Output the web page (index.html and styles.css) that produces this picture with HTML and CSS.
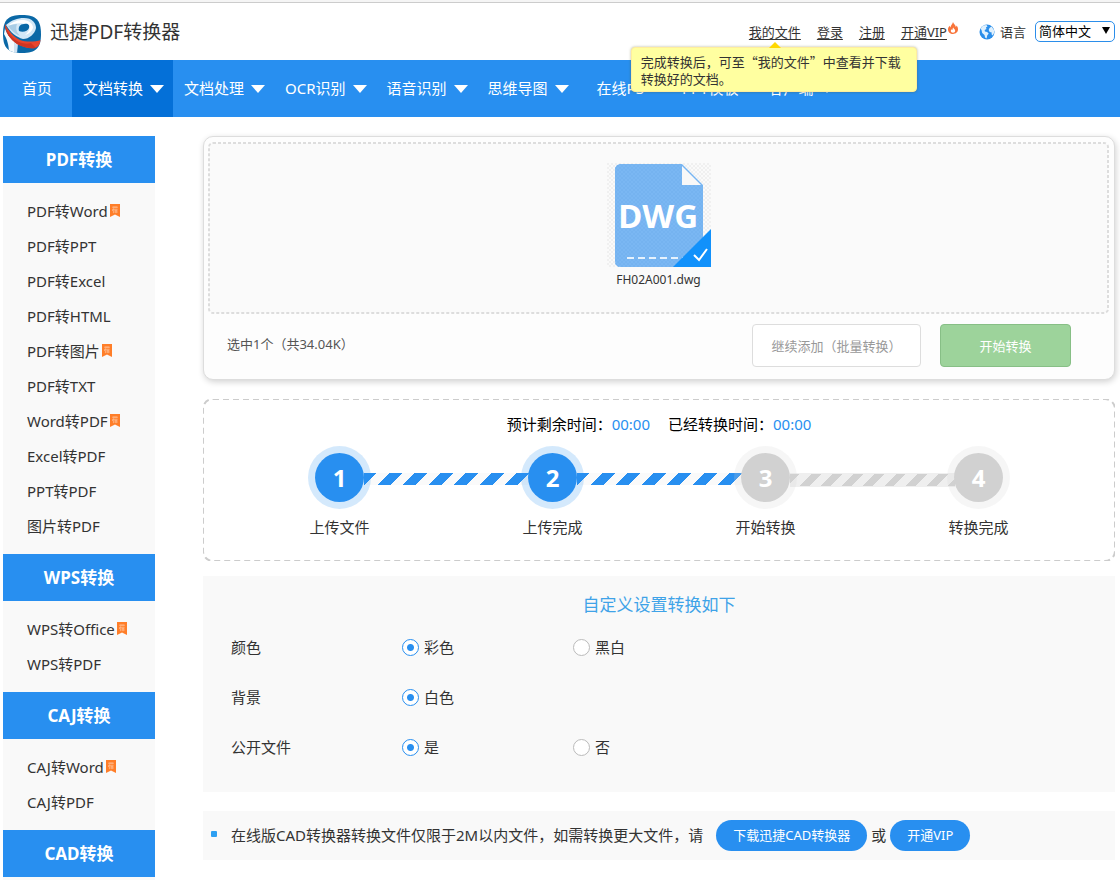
FILE: index.html
```html
<!DOCTYPE html>
<html lang="zh-CN">
<head>
<meta charset="utf-8">
<title>迅捷PDF转换器</title>
<link rel="stylesheet" href="styles.css">
</head>
<body>
<svg class="defs" width="0" height="0" aria-hidden="true">
  <symbol id="flag" viewBox="0 0 10 13">
    <path d="M0 0h10v13l-5-2.400L0 13z" fill="#ff7e29"/>
    <path d="M2 3.200h6M4 2.200v2M6 2.200v2M2.400 5.300h5.200M3.500 4.500L2.400 7M3.400 6.200v3M4.400 6.600h3M6 6.600v2.600M4.200 8h3.600" stroke="#ffd2b3" stroke-width=".6" fill="none"/>
  </symbol>
</svg>

<header class="header">
  <a class="brand" href="#">
    <svg class="brand-logo" viewBox="0 0 38 38" aria-hidden="true">
      <defs><clipPath id="tile"><path d="M19 0C33 0 38 5 38 19S33 38 19 38 0 33 0 19 5 0 19 0z"/></clipPath></defs>
      <g clip-path="url(#tile)">
        <path d="M0 0h38v38H0z" fill="#0a68a6"/>
        <path d="M2 13c1 5 5 10 10 14 1 4 1 8 1 11H6C6 30 4 24 1 19z" fill="#f6fafd"/>
        <path d="M11 26l4 3-1 9h-3z" fill="#cfe2f1"/>
        <path d="M3 10C9 5 14 3 21 3c8 0 12 5 12 10-1 6-7 11-13 11-7-2-12-6-17-14z" fill="#d3e8f7"/>
        <path d="M5 11c5-5 10-6 16-6 6 1 9 4 9 8-1 3-4 6-8 7 4-3 6-7 3-9-5-4-13-3-20 0z" fill="#fff"/>
        <path d="M5 11c3-1 6-2 9-2-1 2-1 5 0 8l3 4C12 19 8 15 5 11z" fill="#a9cde6"/>
        <path d="M16 16c-1-4 1-7 5-7 4-1 6 1 5 4-1 3-6 5-10 3z" fill="#0a68a6"/>
        <path d="M2 9c3 7 9 13 15 16 6 2 14 2 21 0-1 5-3 7-6 8-6 1-12-1-18-4C7 24 2 17 2 9z" fill="#e8452c"/>
        <path d="M2 9c2 9 8 15 14 18 5 2 9 2 12 1l5 5c-7 1-13-1-19-4C7 24 2 17 2 9z" fill="#cf3523"/>
      </g>
    </svg>
    <span class="brand-name">迅捷PDF转换器</span>
  </a>
  <div class="account">
    <span class="files">
      <a href="#">我的文件</a>
      <span class="tip" role="tooltip">完成转换后，可至“我的文件”中查看并下载转换好的文档。</span>
    </span>
    <a href="#">登录</a>
    <a href="#">注册</a>
    <span class="vip"><a href="#">开通VIP</a><svg class="flame" viewBox="0 0 10 12" aria-hidden="true"><path d="M5 0c.3 2 3 3 2.800 5 .6-.3.8-.8.8-1.400C9.600 4.800 10 6 10 7.300 10 10 7.800 12 5 12S0 10 0 7.400C0 5.800.8 4.700 1.800 3.800c0 .8.2 1.300.7 1.600C2.500 3.300 4.600 2.400 5 0z" fill="#f8743a"/><path d="M5.200 5.500c.2 1.200 2 1.700 2 3.300 0 1.200-1 2-2.200 2s-2.200-.8-2.200-2c0-.8.4-1.200.8-1.600.2.500.5.7.8.7.3-.7.2-1.600.8-2.400z" fill="#fff"/></svg></span>
    <div class="lang">
      <svg class="globe" viewBox="0 0 16 16" aria-hidden="true"><circle cx="8" cy="8" r="7.500" fill="#2a8eea"/><path d="M1.500 4.500L4 1.600 7.500 1l1 1.600-1.600 1 .6 1.300-1.800 1 .2 1.500 2.200.6 1.600 1.600-1.500 2-.6 2.800-1.500-.8-.6-2.600-2.300-2L2.500 6zM10.500 4l2-1.500L15 6v3l-1.200 2.600-1.300-1.300.2-1.800-2-.6-1-1.900z" fill="#dff0fd"/></svg>
      <label for="language">语言</label>
      <span class="select"><select id="language"><option>简体中文</option></select></span>
    </div>
  </div>
</header>

<nav class="nav">
  <a class="plain home" href="#">首页</a>
  <a class="drop active" href="#">文档转换</a>
  <a class="drop" href="#">文档处理</a>
  <a class="drop" href="#">OCR识别</a>
  <a class="drop" href="#">语音识别</a>
  <a class="drop" href="#">思维导图</a>
  <a class="plain" href="#">在线PS</a>
  <a class="plain" href="#">PPT模板</a>
  <a class="drop" href="#">客户端</a>
</nav>

<div class="page">
  <aside class="side">
    <h2>PDF转换</h2>
    <ul>
      <li><a href="#">PDF转Word</a><svg class="flag"><use href="#flag"/></svg></li>
      <li><a href="#">PDF转PPT</a></li>
      <li><a href="#">PDF转Excel</a></li>
      <li><a href="#">PDF转HTML</a></li>
      <li><a href="#">PDF转图片</a><svg class="flag"><use href="#flag"/></svg></li>
      <li><a href="#">PDF转TXT</a></li>
      <li><a href="#">Word转PDF</a><svg class="flag"><use href="#flag"/></svg></li>
      <li><a href="#">Excel转PDF</a></li>
      <li><a href="#">PPT转PDF</a></li>
      <li><a href="#">图片转PDF</a></li>
    </ul>
    <h2>WPS转换</h2>
    <ul>
      <li><a href="#">WPS转Office</a><svg class="flag"><use href="#flag"/></svg></li>
      <li><a href="#">WPS转PDF</a></li>
    </ul>
    <h2>CAJ转换</h2>
    <ul>
      <li><a href="#">CAJ转Word</a><svg class="flag"><use href="#flag"/></svg></li>
      <li><a href="#">CAJ转PDF</a></li>
    </ul>
    <h2>CAD转换</h2>
  </aside>

  <main class="main">
    <section class="upload">
      <div class="dropzone">
        <svg class="outline" aria-hidden="true"><rect width="100%" height="100%" rx="4"/></svg>
        <figure class="file">
          <svg class="file-icon" viewBox="0 0 104 104" role="img" aria-label="DWG">
            <defs>
              <pattern id="check" width="4" height="4" patternUnits="userSpaceOnUse"><path d="M0 0h2v2H0zM2 2h2v2H2z" fill="#f0f0f0"/></pattern>
              <pattern id="weave" width="4" height="4" patternUnits="userSpaceOnUse"><path d="M0 0h2v2H0zM2 2h2v2H2z" fill="#75b3f0"/></pattern>
            </defs>
            <path d="M0 0h104v104H0z" fill="url(#check)"/>
            <path d="M14 1h61l21 21v82H14q-6 0-6-6V7q0-6 6-6z" fill="#7ab7f3"/>
            <path d="M14 1h61l21 21v82H14q-6 0-6-6V7q0-6 6-6z" fill="url(#weave)"/>
            <path d="M75 3v19h19z" fill="#f8f8f8"/>
            <text class="file-type" x="51" y="65" text-anchor="middle">DWG</text>
            <path d="M20 95h60" stroke="#e6f2fd" stroke-width="2" stroke-dasharray="7 4"/>
            <path d="M104 66v38H66z" fill="#1191fb"/>
            <path d="M87 92l5 5 8-11" fill="none" stroke="#fff" stroke-width="2"/>
          </svg>
          <figcaption>FH02A001.dwg</figcaption>
        </figure>
      </div>
      <div class="actions">
        <p>选中1个（共34.04K）</p>
        <button class="more" type="button">继续添加（批量转换）</button>
        <button class="start" type="button">开始转换</button>
      </div>
    </section>

    <section class="progress">
      <svg class="outline" aria-hidden="true"><rect width="100%" height="100%" rx="10"/></svg>
      <p class="times"><span>预计剩余时间：<b>00:00</b></span><span>已经转换时间：<b>00:00</b></span></p>
      <ol class="steps">
        <li class="done"><span class="dot">1</span>上传文件</li>
        <li class="done"><span class="dot">2</span>上传完成</li>
        <li><span class="dot">3</span>开始转换</li>
        <li><span class="dot">4</span>转换完成</li>
      </ol>
    </section>

    <form class="options">
      <h3>自定义设置转换如下</h3>
      <div class="option" role="radiogroup" aria-labelledby="o-color">
        <span id="o-color">颜色</span>
        <label><input type="radio" name="color" checked>彩色</label>
        <label><input type="radio" name="color">黑白</label>
      </div>
      <div class="option" role="radiogroup" aria-labelledby="o-bg">
        <span id="o-bg">背景</span>
        <label><input type="radio" name="bg" checked>白色</label>
      </div>
      <div class="option" role="radiogroup" aria-labelledby="o-public">
        <span id="o-public">公开文件</span>
        <label><input type="radio" name="public" checked>是</label>
        <label><input type="radio" name="public">否</label>
      </div>
    </form>

    <div class="note">
      <span class="note-text">在线版CAD转换器转换文件仅限于2M以内文件，如需转换更大文件，请</span>
      <a href="#">下载迅捷CAD转换器</a>
      <span>或</span>
      <a href="#">开通VIP</a>
    </div>
  </main>
</div>
</body>
</html>
```
FILE: styles.css
```css
* { box-sizing: border-box; }

body, h2, h3, p, ul, ol, figure { margin: 0; padding: 0; }

body {
  font: 15px/20px "Noto Sans", "Noto Sans CJK SC", sans-serif;
  color: #333;
  background: #fff;
  border-top: 2px solid #f5f5f5;
}

a { color: inherit; text-decoration: none; }
ul, ol { list-style: none; }
button, select { font: inherit; }
.defs { position: absolute; }

/* Header */
.header {
  display: flex;
  justify-content: space-between;
  height: 58px;
  padding: 0 5px 0 3px;
  border-top: 1px solid #ccc;
}

.brand { display: flex; align-items: center; gap: 9px; padding-top: 5px; }
.brand-logo { width: 38px; height: 38px; }
.brand-name { font-size: 19px; line-height: 28px; padding-bottom: 4px; }

.account {
  display: flex;
  align-items: center;
  align-self: flex-start;
  gap: 16px;
  height: 57px;
  font-size: 13px;
}

.account a { text-decoration: underline; text-underline-offset: 2px; }
.files { position: relative; }
.vip { display: flex; }
.flame { width: 10px; height: 12px; margin: 0 5px 0 1px; }

.tip {
  position: absolute;
  z-index: 5;
  top: 25px;
  left: -118px;
  width: 286px;
  padding: 5px 9px 4px;
  font: 13px/17px "Noto Sans CJK SC", sans-serif;
  background: #ffffa0;
  border: 1px solid #ffee9c;
  border-radius: 4px;
  box-shadow: 0 0 3px rgba(80, 80, 0, .4);
}

.tip::before {
  content: "";
  position: absolute;
  top: -6px;
  left: 137px;
  border: solid transparent;
  border-width: 0 6px 6px;
  border-bottom-color: #ffd800;
}

.lang { display: flex; align-items: center; gap: 5px; }
.globe { width: 16px; height: 16px; }
.select { position: relative; margin-left: 4px; }

.select::after {
  content: "";
  position: absolute;
  top: 6px;
  right: 5px;
  border: solid transparent;
  border-width: 7px 4px 0;
  border-top-color: #000;
  pointer-events: none;
}

.select select {
  display: block;
  appearance: none;
  width: 80px;
  height: 21px;
  padding: 0 3px;
  font-size: 13px;
  line-height: 19px;
  color: #000;
  background: #fff;
  border: 1px solid #2b8eea;
  border-radius: 5px;
}

/* Navigation */
.nav { display: flex; height: 57px; line-height: 57px; color: #fff; background: #288ff0; }
.nav .plain { padding: 0 19px; }
.nav .home { padding: 0 20px 0 22px; }
.nav .drop { display: flex; align-items: center; gap: 7px; padding: 0 9px 0 11px; }
.nav .drop::after { content: ""; border: solid transparent; border-width: 8px 7px 0; border-top-color: #fff; }
.nav .active { background: #0470d8; }

/* Page body */
.page { display: flex; gap: 48px; padding: 19px 5px 0 3px; }

.side { flex: none; width: 152px; padding-bottom: 3px; background: #f9f9f9; }
.side h2 { font-size: 17px; line-height: 47px; color: #fff; text-align: center; background: #288ff0; }
.side ul { padding: 10px 0 11px 24px; }
.side li { display: flex; align-items: center; gap: 2px; height: 35px; }
.flag { width: 10px; height: 13px; }

.main { flex: 1; min-width: 0; }

/* Dashed outline that follows the box it sits in */
.outline { position: absolute; inset: 0; width: 100%; height: 100%; pointer-events: none; }
.outline rect { fill: none; stroke: #ccc; stroke-width: 2px; stroke-dasharray: 6 4; }

/* Upload panel */
.upload {
  padding: 6px 6px 12px 5px;
  background: #fdfdfd;
  border: 1px solid #ddd;
  border-radius: 10px;
  box-shadow: 1px 2px 6px rgba(0, 0, 0, .18);
}

.dropzone { position: relative; height: 170px; padding-top: 20px; background: #fafafa; border-radius: 4px; }
.dropzone .outline { overflow: visible; }
.dropzone .outline rect { stroke: #ddd; stroke-dasharray: 3 2; }
.file { display: flex; flex-direction: column; align-items: center; font-size: 12px; line-height: 26px; }
.file-icon { width: 104px; height: 104px; }
.file-type { font: bold 33px "Open Sans", sans-serif; fill: #fff; }

.actions { display: flex; align-items: center; gap: 19px; padding: 11px 37px 0 18px; font-size: 13px; }
.actions p { flex: 1; padding-bottom: 4px; color: #555; }
.actions button { height: 43px; border-radius: 4px; }
.more { width: 169px; padding: 0; color: #999; background: #fff; border: 1px solid #ddd; }
.start { width: 131px; color: #fff; background: #9dd39b; border: 1px solid #87bf86; }

/* Progress panel */
.progress { position: relative; margin-top: 19px; padding: 15px 30px 24px; }
.times { display: flex; justify-content: center; gap: 18px; color: #000; }
.times b { font-weight: normal; color: #288ff0; }

.steps { display: grid; grid-template-columns: repeat(4, 1fr); padding-top: 12px; text-align: center; }
.steps li { position: relative; }

.steps li:not(:last-child)::before {
  content: "";
  position: absolute;
  top: 27px;
  left: calc(50% + 24px);
  width: calc(100% - 48px);
  height: 12px;
  background: repeating-linear-gradient(135deg, #d1d1d1 0 7px, #efefef 7px 15px);
  border: solid #efefef;
  border-width: 1px 0;
}

.steps li.done:not(:last-child)::before {
  background: repeating-linear-gradient(135deg, #288ff0 0 9px, #fafafa 9px 18px);
  border: 0;
}

.dot {
  position: relative;
  z-index: 1;
  display: block;
  width: 63px;
  height: 63px;
  margin: 0 auto 8px;
  font-size: 24px;
  font-weight: bold;
  line-height: 49px;
  color: #fff;
  background: #d1d1d1;
  background-clip: padding-box;
  border: 7px solid rgba(209, 209, 209, .2);
  border-radius: 50%;
}

.done .dot { background-color: #288ff0; border-color: rgba(40, 143, 240, .2); }

/* Options */
.options { margin-top: 15px; padding: 16px 28px 20px; background: #f9f9f9; }
.options h3 { padding-bottom: 5px; font-size: 17px; font-weight: normal; line-height: 25px; color: #3fa3e8; text-align: center; }
.option { display: grid; grid-template-columns: repeat(auto-fill, 171px); height: 50px; align-items: center; }
.option label { display: flex; align-items: center; gap: 5px; }

.option input {
  appearance: none;
  width: 17px;
  height: 17px;
  margin: 0;
  background: #fff;
  border: 1px solid #bbb;
  border-radius: 50%;
}

.option input:checked { background: radial-gradient(circle, #288ff0 0 3px, #fff 4px); border-color: #288ff0; }

/* Note */
.note { display: flex; align-items: center; gap: 4px; margin-top: 19px; padding: 9px 8px; background: #f9f9f9; }
.note::before { content: ""; width: 6px; height: 6px; margin: 0 10px 3px 0; background: #2ea0f2; border-radius: 1px; }
.note span { padding-bottom: 2px; }
.note .note-text { padding-right: 9px; }
.note a { padding: 0 17px; font-size: 13px; line-height: 31px; color: #fff; background: #288ff0; border-radius: 16px; }
```
